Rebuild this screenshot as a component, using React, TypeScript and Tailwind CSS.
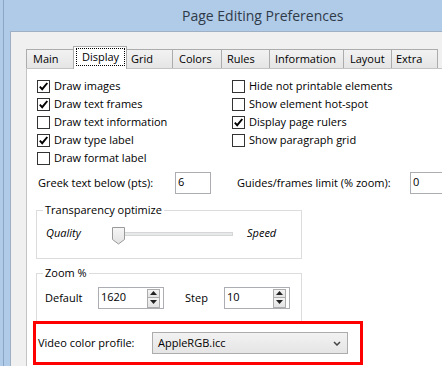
import type { ReactNode } from 'react'

function Check({ checked, label }: { checked?: boolean; label: string }) {
  return (
    <div className="flex h-[18px] items-center gap-[4px]">
      <span className="flex h-[13px] w-[13px] shrink-0 items-center justify-center border border-[#333333] bg-white">
        {checked && (
          <svg width="11" height="11" viewBox="0 0 11 11">
            <path d="M1.8 5.6 L4.2 8.2 L9.3 2" fill="none" stroke="#000" strokeWidth="1.9" />
          </svg>
        )}
      </span>
      <span>{label}</span>
    </div>
  )
}

function Arrow({ up }: { up?: boolean }) {
  return (
    <svg width="7" height="4" viewBox="0 0 7 4">
      <path d={up ? 'M0 4 L3.5 0 L7 4 Z' : 'M0 0 L3.5 4 L7 0 Z'} fill="#222" />
    </svg>
  )
}

function Spin({ value }: { value: string }) {
  return (
    <div className="flex h-[22px] w-[66px] items-center border border-[#abadb3] bg-white">
      <span className="flex-1 pl-[2px] pb-[2px]">{value}</span>
      <div className="mr-[3px] flex w-[13px] flex-col">
        <div className="flex h-[9px] items-center justify-center border border-[#acacac] bg-linear-to-b from-[#f4f4f4] to-[#e3e3e3]">
          <Arrow up />
        </div>
        <div className="flex h-[10px] items-center justify-center border border-t-0 border-[#acacac] bg-linear-to-b from-[#f4f4f4] to-[#e3e3e3]">
          <Arrow />
        </div>
      </div>
    </div>
  )
}

function Group({ title, children }: { title: string; children: ReactNode }) {
  return (
    <fieldset className="w-[266px] border border-[#dcdcdc] pl-[6px]">
      <legend className="px-[2px] leading-[14px]">{title}</legend>
      <div className="flex h-[41px] items-start pt-[7px]">{children}</div>
    </fieldset>
  )
}

const tabs = [
  { label: 'Grid', cls: 'w-[46px] pl-[4px]' },
  { label: 'Colors', cls: 'w-[49px] pl-[6px]' },
  { label: 'Rules', cls: 'w-[48px] pl-[5px]' },
  { label: 'Information', cls: 'w-[74px] pl-[5px]' },
  { label: 'Layout', cls: 'w-[48px] pl-[6px]' },
  { label: 'Extra', cls: 'w-[46px] pl-[4px]' },
]

export default function App() {
  return (
    <div className="h-[366px] w-[442px] overflow-hidden bg-[#afcbe8] pl-[3px] font-['Open_Sans',sans-serif] text-[11px] leading-[14px] text-black">
      <div className="flex h-full flex-col border-l border-[#8aa6c6]">
        {/* title bar */}
        <div className="flex h-[31px] shrink-0 items-center pl-[178px] pt-[1px] text-[14px] text-[#2f3a48]">
          Page Editing Preferences
        </div>

        {/* client area */}
        <div className="ml-[6px] flex-1 border-l border-t border-[#9fb0c4] bg-[#f0f0f0] pl-[15px] pt-[14px]">
          {/* tab strip */}
          <div className="flex h-[22px] items-end">
            <div className="flex h-[19px] w-[47px] items-center border-l border-t border-[#acacac] bg-linear-to-b from-[#f2f2f2] to-[#e5e5e5] pl-[6px]">
              Main
            </div>
            <div className="relative z-10 -mb-[1px] flex h-[23px] w-[54px] items-start border-l border-r border-t border-[#acacac] bg-white pl-[2px] pt-[1px]">
              <span className="flex h-[18px] w-[49px] items-center justify-center border border-dotted border-black">
                Display
              </span>
            </div>
            {tabs.map((t) => (
              <div
                key={t.label}
                className={`flex h-[19px] items-center border-r border-t border-[#acacac] bg-linear-to-b from-[#f2f2f2] to-[#e5e5e5] ${t.cls}`}
              >
                {t.label}
              </div>
            ))}
          </div>

          {/* tab panel */}
          <div className="h-full border-l border-t border-[#c4c4c4] bg-white pl-[10px] pt-[8px]">
            <div className="flex">
              <div className="flex w-[195px] flex-col">
                <Check checked label="Draw images" />
                <Check checked label="Draw text frames" />
                <Check label="Draw text information" />
                <Check checked label="Draw type label" />
                <Check label="Draw format label" />
              </div>
              <div className="flex flex-col">
                <Check label="Hide not printable elements" />
                <Check label="Show element hot-spot" />
                <Check checked label="Display page rulers" />
                <Check label="Show paragraph grid" />
              </div>
            </div>

            <div className="mt-[5px] flex h-[22px] items-center">
              <span className="ml-[1px] w-[137px] shrink-0">Greek text below (pts):</span>
              <div className="flex h-[22px] w-[36px] shrink-0 items-center border border-[#abadb3] pb-[2px] pl-[2px]">6</div>
              <span className="ml-[26px] w-[173px] shrink-0">Guides/frames limit (% zoom):</span>
              <div className="flex h-[22px] w-[40px] shrink-0 items-center border border-[#abadb3] pb-[2px] pl-[2px]">0</div>
            </div>

            <div className="-ml-[1px] mt-[9px]">
              <Group title="Transparency optimize">
                <div className="flex h-[18px] items-center">
                  <span className="ml-[3px] w-[66px] italic">Quality</span>
                  <div className="relative h-[18px] w-[121px]">
                    <div className="absolute left-[1px] right-0 top-[8px] h-[4px] border border-[#d6d6d6] bg-[#e7eaea]" />
                    <svg className="absolute left-0 top-[3px]" width="13" height="18" viewBox="0 0 13 18">
                      <defs>
                        <linearGradient id="th" x1="0" y1="0" x2="0" y2="1">
                          <stop offset="0" stopColor="#f6f6f6" />
                          <stop offset="1" stopColor="#e2e2e2" />
                        </linearGradient>
                      </defs>
                      <path d="M0.5 0.5 H12.5 V12.5 L6.5 17 L0.5 12.5 Z" fill="url(#th)" stroke="#9a9a9a" />
                    </svg>
                  </div>
                  <span className="ml-[14px] italic">Speed</span>
                </div>
              </Group>
            </div>

            <div className="-ml-[1px] mt-[7px]">
              <Group title="Zoom %">
                <div className="flex h-[22px] items-center">
                  <span className="ml-[2px] w-[53px]">Default</span>
                  <Spin value="1620" />
                  <span className="ml-[21px] w-[39px]">Step</span>
                  <Spin value="10" />
                </div>
              </Group>
            </div>

            <div className="-ml-[4px] -mt-[1px] flex h-[44px] w-[330px] items-center border-[3px] border-[#ff0000] pl-[2px]">
              <span className="w-[114px] shrink-0">Video color profile:</span>
              <div className="flex h-[22px] w-[196px] items-center border border-[#acacac] bg-linear-to-b from-[#f2f2f2] to-[#e5e5e5] pl-[5px] pr-[6px]">
                <span className="flex-1 pb-[1px]">AppleRGB.icc</span>
                <svg width="8" height="5" viewBox="0 0 8 5">
                  <path d="M1 1 L4 4 L7 1" fill="none" stroke="#444" strokeWidth="1.5" />
                </svg>
              </div>
            </div>
          </div>
        </div>
      </div>
    </div>
  )
}
